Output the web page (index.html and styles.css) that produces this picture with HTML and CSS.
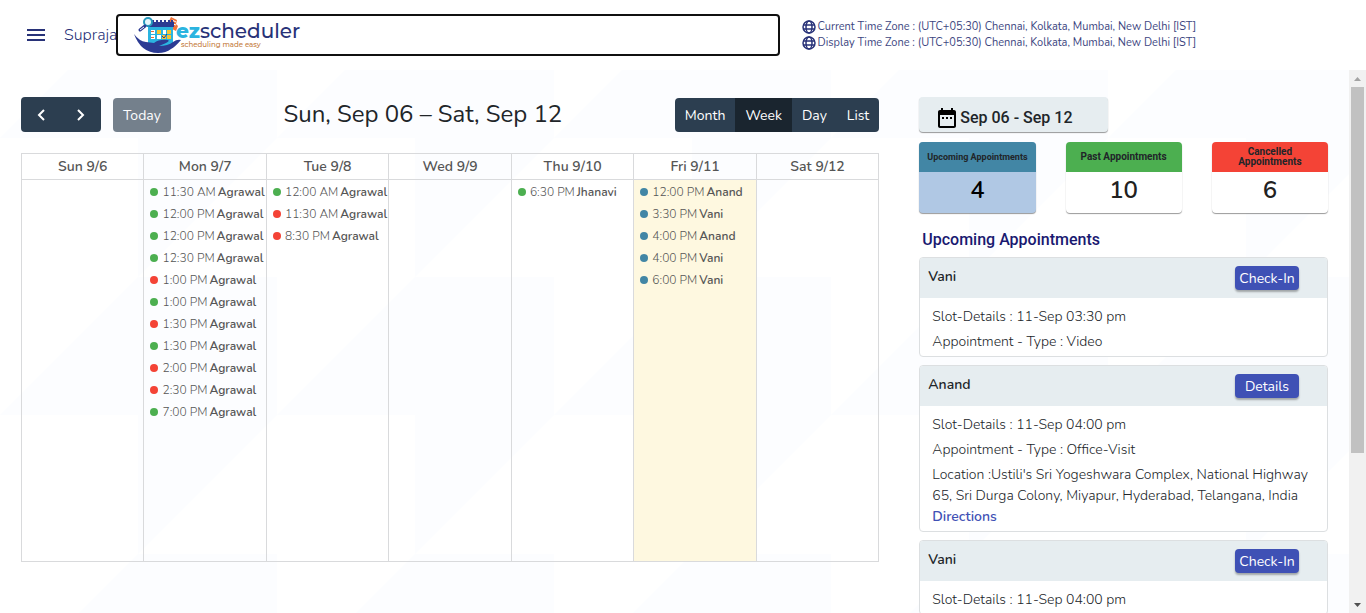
FILE: index.html
```html
<!DOCTYPE html>
<html lang="en">
<head>
<meta charset="utf-8">
<meta name="viewport" content="width=device-width, initial-scale=1">
<title>ezscheduler</title>
<link rel="stylesheet" href="styles.css">
</head>
<body>
<header class="topbar">
  <button class="menu" type="button" aria-label="Menu"><span></span><span></span><span></span></button>
  <span class="user">Supraja</span>
  <a class="brand" href="#">
    <svg class="brand-icon" viewBox="0 0 48 38" aria-hidden="true">
      <path d="M35 5l2-4 6 3-1 4 2 2-2 5-4-2z" fill="#f0743a"/>
      <path d="M38 4l4 2M39 8l3 1" stroke="#fff" stroke-width="1"/>
      <path d="M14 8h25v20q-3 6-13 6-9-1-12-6z" fill="#2bb4e0"/>
      <path d="M13 6h27v5H13z" fill="#2c3b93"/>
      <path d="M15 4v4M19 4v4M23 4v4M27 4v4M31 4v4M35 4v4M38 4v4" stroke="#2c3b93" stroke-width="2"/>
      <path d="M17 14h4v4h-4zM29 14h3v4h-3zM17 19h4v4h-4zM23 19h4v4h-4z" fill="#fff"/>
      <path d="M33 14h4v4h-4zM23 14h4v4h-4zM28 19h4v4h-4zM33 19h4v4h-4z" fill="#f7c531"/>
      <path d="M17 15h3v1h-3zM17 21h3v1h-3z" fill="#e96b3c"/>
      <path d="M28 20l2 2 3-4" stroke="#2c3b93" fill="none"/>
      <circle cx="14" cy="6" r="4" fill="#e6f6fb" stroke="#2699bd" stroke-width="2"/>
      <path d="M11 10l-5 4" stroke="#2c3b93" stroke-width="3" stroke-linecap="round"/><path d="M10 11l-4 3" stroke="#fff" stroke-width="1"/>
      <path d="M0 18q5 7 12 8l8 1q5-4 14-3 2 1-2 3l-7 3q9 0 14-4 4-3 8-2-6 7-10 9-5 4-13 4Q7 37 0 18z" fill="#2c3b93"/>
    </svg>
    <span class="brand-words">
      <span class="brand-name"><b>ez</b>scheduler</span>
      <span class="brand-tag">scheduling made easy</span>
    </span>
  </a>
  <div class="zones">
    <p class="zone"><svg class="globe" viewBox="0 0 14 14" aria-hidden="true"><circle cx="7" cy="7" r="6"/><ellipse cx="7" cy="7" rx="3" ry="6"/><path d="M1 5h12M1 9h12"/></svg>Current Time Zone : (UTC+05:30) Chennai, Kolkata, Mumbai, New Delhi [IST]</p>
    <p class="zone"><svg class="globe" viewBox="0 0 14 14" aria-hidden="true"><circle cx="7" cy="7" r="6"/><ellipse cx="7" cy="7" rx="3" ry="6"/><path d="M1 5h12M1 9h12"/></svg>Display Time Zone : (UTC+05:30) Chennai, Kolkata, Mumbai, New Delhi [IST]</p>
  </div>
</header>
<div class="viewport">
<main class="content">
  <section class="calendar">
    <div class="toolbar">
      <div class="tools">
        <div class="group">
          <button class="btn arrow" type="button" aria-label="Previous"><svg viewBox="0 0 8 14" aria-hidden="true"><path d="M7 2L2 7l5 5"/></svg></button>
          <button class="btn arrow" type="button" aria-label="Next"><svg viewBox="0 0 8 14" aria-hidden="true"><path d="M1 2l5 5-5 5"/></svg></button>
        </div>
        <button class="btn today" type="button" disabled>Today</button>
      </div>
      <h2 class="range">Sun, Sep 06 – Sat, Sep 12</h2>
      <div class="group">
        <button class="btn" type="button">Month</button>
        <button class="btn active" type="button">Week</button>
        <button class="btn" type="button">Day</button>
        <button class="btn" type="button">List</button>
      </div>
    </div>
    <table class="week">
      <thead>
        <tr><th>Sun 9/6</th><th>Mon 9/7</th><th>Tue 9/8</th><th>Wed 9/9</th><th>Thu 9/10</th><th>Fri 9/11</th><th>Sat 9/12</th></tr>
      </thead>
      <tbody>
        <tr>
          <td></td>
          <td><ul class="events">
            <li class="past">11:30 AM <b>Agrawal</b></li>
            <li class="past">12:00 PM <b>Agrawal</b></li>
            <li class="past">12:00 PM <b>Agrawal</b></li>
            <li class="past">12:30 PM <b>Agrawal</b></li>
            <li class="cancelled">1:00 PM <b>Agrawal</b></li>
            <li class="past">1:00 PM <b>Agrawal</b></li>
            <li class="cancelled">1:30 PM <b>Agrawal</b></li>
            <li class="past">1:30 PM <b>Agrawal</b></li>
            <li class="cancelled">2:00 PM <b>Agrawal</b></li>
            <li class="cancelled">2:30 PM <b>Agrawal</b></li>
            <li class="past">7:00 PM <b>Agrawal</b></li>
          </ul></td>
          <td><ul class="events">
            <li class="past">12:00 AM <b>Agrawal</b></li>
            <li class="cancelled">11:30 AM <b>Agrawal</b></li>
            <li class="cancelled">8:30 PM <b>Agrawal</b></li>
          </ul></td>
          <td></td>
          <td><ul class="events">
            <li class="past">6:30 PM <b>Jhanavi</b></li>
          </ul></td>
          <td class="current"><ul class="events">
            <li class="upcoming">12:00 PM <b>Anand</b></li>
            <li class="upcoming">3:30 PM <b>Vani</b></li>
            <li class="upcoming">4:00 PM <b>Anand</b></li>
            <li class="upcoming">4:00 PM <b>Vani</b></li>
            <li class="upcoming">6:00 PM <b>Vani</b></li>
          </ul></td>
          <td></td>
        </tr>
      </tbody>
    </table>
  </section>
  <aside class="summary">
    <div class="period">
      <svg class="period-icon" viewBox="0 0 18 20" aria-hidden="true"><path d="M16 2h-1V0h-2v2H5V0H3v2H2C.9 2 0 2.900 0 4v14c0 1.100.9 2 2 2h14c1.100 0 2-.9 2-2V4c0-1.100-.9-2-2-2zm0 16H2V7h14v11zM4 9h2v2H4zM8 9h2v2H8zM12 9h2v2h-2z"/></svg>
      <span>Sep 06 - Sep 12</span>
    </div>
    <div class="stats">
      <div class="stat stat-upcoming"><h3>Upcoming Appointments</h3><p>4</p></div>
      <div class="stat stat-past"><h3>Past Appointments</h3><p>10</p></div>
      <div class="stat stat-cancelled"><h3>Cancelled Appointments</h3><p>6</p></div>
    </div>
    <h2 class="list-title">Upcoming Appointments</h2>
    <div class="cards">
      <article class="card">
        <header class="card-head"><h3>Vani</h3><button class="action" type="button">Check-In</button></header>
        <div class="card-body"><p>Slot-Details : 11-Sep 03:30 pm</p><p>Appointment - Type : Video</p></div>
      </article>
      <article class="card">
        <header class="card-head"><h3>Anand</h3><button class="action" type="button">Details</button></header>
        <div class="card-body"><p>Slot-Details : 11-Sep 04:00 pm</p><p>Appointment - Type : Office-Visit</p><p>Location :Ustili's Sri Yogeshwara Complex, National Highway 65, Sri Durga Colony, Miyapur, Hyderabad, Telangana, India <a class="directions" href="#">Directions</a></p></div>
      </article>
      <article class="card">
        <header class="card-head"><h3>Vani</h3><button class="action" type="button">Check-In</button></header>
        <div class="card-body"><p>Slot-Details : 11-Sep 04:00 pm</p></div>
      </article>
    </div>
  </aside>
</main>
<div class="scrollbar" aria-hidden="true">
  <svg class="scroll-arrow" viewBox="0 0 17 17"><path d="M5 11h7L8.500 7z" fill="#a3a3a3"/></svg>
  <div class="scroll-track"><div class="scroll-thumb"></div></div>
  <svg class="scroll-arrow" viewBox="0 0 17 17"><path d="M5 7h7l-3.500 4z" fill="#505050"/></svg>
</div>
</div>
</body>
</html>
```
FILE: styles.css
```css
* { box-sizing: border-box; }
body {
  margin: 0;
  height: 100vh;
  display: flex;
  flex-direction: column;
  overflow: hidden;
  color: #212529;
  font: 300 14px/21px Nunito, Lato, "Open Sans", sans-serif;
  background: #fff url("data:image/svg+xml,%3Csvg xmlns='http://www.w3.org/2000/svg' width='277' height='277'%3E%3Cpath d='M138 0H277V138L138 277V138H0z' fill='%23fcfdff'/%3E%3C/svg%3E");
}
h2, h3, p, ul { margin: 0; padding: 0; }
button { font: inherit; cursor: pointer; }

.topbar {
  flex: none;
  height: 70px;
  padding-left: 27px;
  display: flex;
  align-items: center;
  background: #fff;
  color: #283278;
}
.menu {
  width: 18px;
  padding: 0;
  border: 0;
  background: none;
  display: grid;
  gap: 3px;
}
.menu span { height: 2px; background: #283278; }
.user { width: 52px; margin-left: 19px; overflow: hidden; font-size: 16px; color: #283278; }
.brand {
  flex: 668;
  height: 42px;
  padding-left: 16px;
  border: 2px solid #101010;
  border-radius: 4px;
  display: flex;
  align-items: center;
  color: #283278;
  text-decoration: none;
}
.brand-icon { width: 48px; height: 38px; flex: none; }
.brand-words { display: grid; margin-left: -6px; font-family: Montserrat, Lato, sans-serif; }
.brand-name { font-size: 20px; line-height: 20px; font-weight: 500; }
.brand-name b { font-weight: 800; color: #2bb4e0; }
.brand-tag { padding-left: 5px; font-size: 7px; line-height: 8px; font-weight: 500; color: #c47a3a; }
.zones { flex: 586; padding-left: 22px; font-size: 11px; line-height: 16px; font-weight: 400; color: #3d467f; }
.zone { display: flex; align-items: center; gap: 2px; white-space: nowrap; }
.globe { width: 14px; height: 14px; fill: none; stroke: #283278; stroke-width: 1.500; }

.viewport { flex: 1; min-height: 0; display: flex; }
.content {
  flex: 1;
  min-width: 0;
  padding: 27px 21px 0;
  display: grid;
  grid-template-columns: minmax(0, 21fr) minmax(0, 10fr);
  column-gap: 40px;
  overflow: hidden;
}
.toolbar { display: flex; justify-content: space-between; align-items: end; height: 35px; }
.tools { display: flex; gap: 12px; align-items: end; }
.group { display: flex; }
.btn {
  height: 34px;
  padding: 0 10px;
  border: 0;
  background: #2c3e50;
  color: #fff;
  font-weight: 400;
}
.group .btn:first-child { border-radius: 4px 0 0 4px; }
.group .btn:last-child { border-radius: 0 4px 4px 0; }
.group .arrow { height: 35px; width: 40px; padding: 6px 0 0; }
.arrow svg { width: 8px; height: 14px; fill: none; stroke: #fff; stroke-width: 2; }
.today { border-radius: 4px; opacity: .65; }
.active { background: #1a252f; }
.range { align-self: center; padding-bottom: 2px; font-size: 24px; line-height: 32px; font-weight: 400; }

.week {
  width: 100%;
  margin-top: 21px;
  border-collapse: collapse;
  table-layout: fixed;
  color: #555;
}
.week th, .week td { border: 1px solid #d9dadc; padding: 0; }
.week th { height: 26px; font-weight: 600; }
.week td { height: 382px; vertical-align: top; }
.week .current { background: #fef8e0; }
.events { list-style: none; padding: 1px 0 0 6px; font-size: 12px; line-height: 22px; white-space: nowrap; }
.events b { font-weight: 600; }
.events li { display: flex; align-items: center; gap: 2px; }
.events li::before { content: ""; width: 8px; height: 8px; margin-right: 2px; border-radius: 50%; }
.events .past::before { background: #4caf50; }
.events .cancelled::before { background: #f44336; }
.events .upcoming::before { background: #4286a5; }

.period {
  width: 189px;
  height: 35px;
  padding: 6px 0 0 19px;
  display: flex;
  align-items: center;
  gap: 4px;
  border-radius: 4px;
  background: #e6edf0;
  box-shadow: 0 1px 1px rgba(0, 0, 0, .4);
  font: 500 16px/20px Roboto, sans-serif;
}
.period-icon { width: 18px; height: 20px; }
.stats { display: grid; grid-template-columns: repeat(3, 1fr); gap: 30px; margin-top: 10px; font-family: Roboto, sans-serif; text-align: center; }
.stat { height: 71px; border-radius: 4px; overflow: hidden; background: #fff; box-shadow: 0 1px 1px rgba(0, 0, 0, .4); }
.stat h3 { height: 30px; padding: 0 20px; display: grid; place-items: center; font-size: 10px; line-height: 10px; font-weight: 700; }
.stat p { font: 600 24px/36px Nunito, Lato, sans-serif; color: #212121; }
.stat-upcoming { background: #b0c8e4; }
.stat-upcoming h3 { padding: 0; font-size: 9px; background: #4286a5; white-space: nowrap; }
.stat-upcoming p { color: #000; }
.stat-past h3 { padding: 0; background: #4caf50; }
.stat-cancelled h3 { background: #f44336; }
.list-title { margin: 17px 0 7px 3px; font: 500 16px/20px Roboto, sans-serif; color: #191970; }
.cards { display: grid; gap: 8px; }
.card { border: 1px solid #dcdfe1; border-radius: 4px; background: #fff; overflow: hidden; }
.card-head { height: 40px; padding: 0 28px 0 8px; display: flex; align-items: center; justify-content: space-between; background: #e6edf0; }
.card-head h3 { padding-bottom: 3px; font-size: 14px; font-weight: 600; }
.action {
  width: 64px;
  height: 24px;
  padding: 0;
  border: 0;
  border-radius: 4px;
  background: #3f51b5;
  box-shadow: 0 2px 2px rgba(0, 0, 0, .3);
  color: #fff;
  font-weight: 400;
}
.card-body { padding: 8px 12px 4px; display: grid; gap: 4px; }
.directions { color: #3f51b5; font-weight: 600; text-decoration: none; }

.scrollbar { width: 17px; display: flex; flex-direction: column; background: #f1f1f1; }
.scroll-arrow { width: 17px; height: 17px; flex: none; }
.scroll-track { flex: 1; padding: 0 2px; }
.scroll-thumb { height: 72%; background: #c1c1c1; }
```
